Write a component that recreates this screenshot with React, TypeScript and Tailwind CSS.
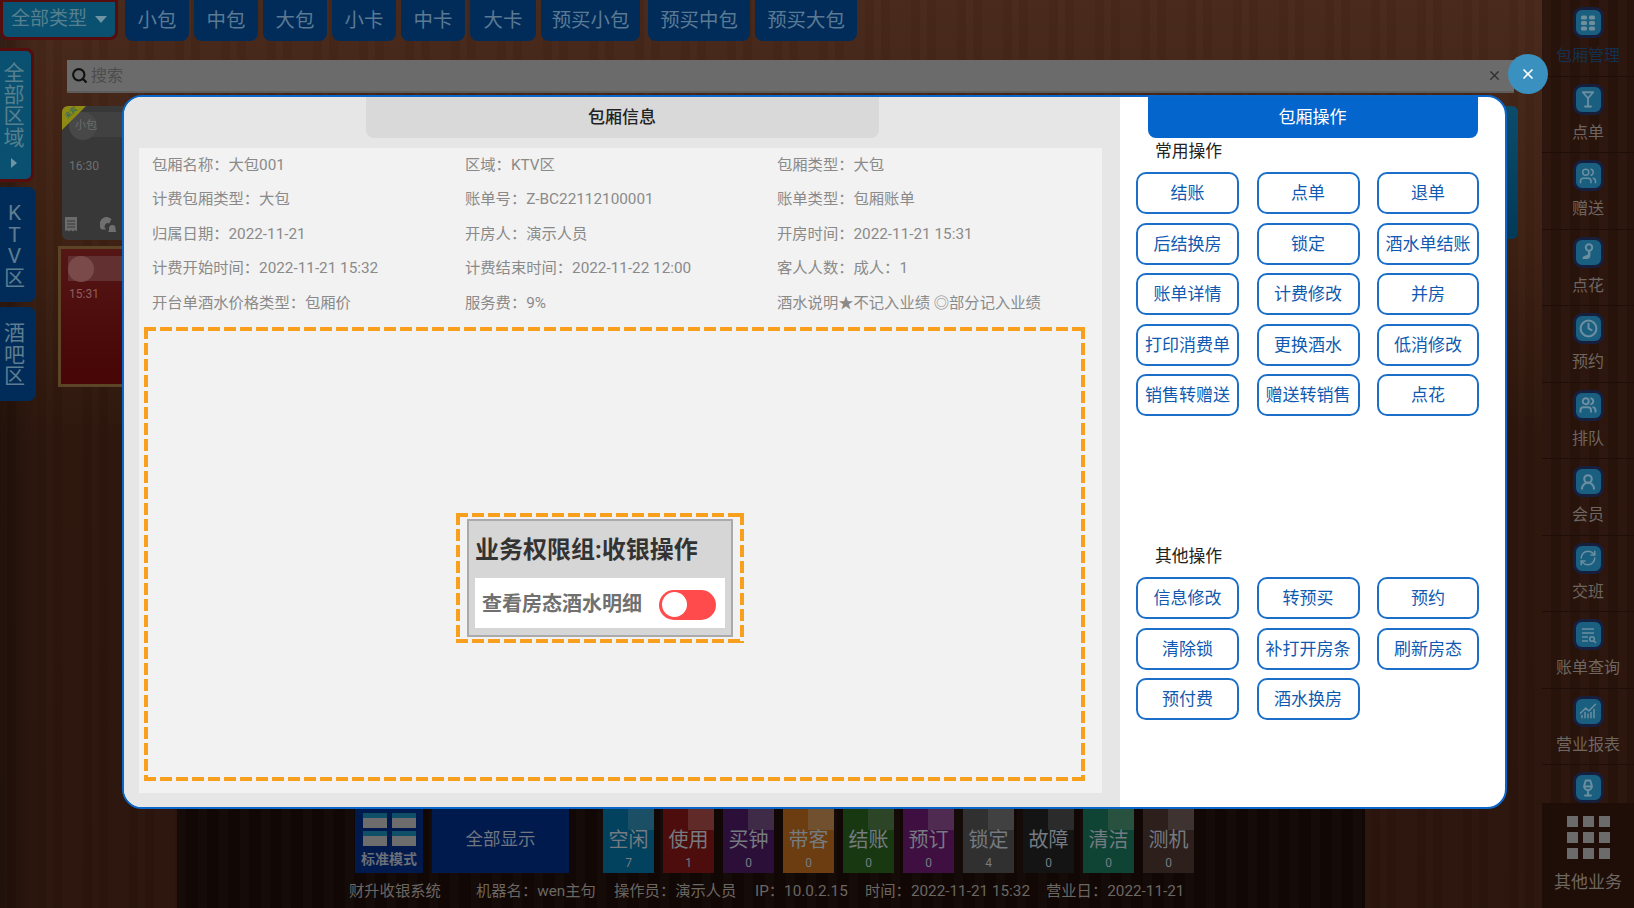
import {Search, X, Martini, Users, Clock, UserRound, RefreshCw, ChartNoAxesCombined, Wine} from 'lucide-react';
import type {ReactNode} from 'react';

const typeTabs = [
  {label: '小包', w: 'w-[64px]'},
  {label: '中包', w: 'w-[64px]'},
  {label: '大包', w: 'w-[64px]'},
  {label: '小卡', w: 'w-[64px]'},
  {label: '中卡', w: 'w-[64px]'},
  {label: '大卡', w: 'w-[66px]'},
  {label: '预买小包', w: 'w-[99px]'},
  {label: '预买中包', w: 'w-[102px] ml-[3px]'},
  {label: '预买大包', w: 'w-[102px]'},
];

const infoRows = [
  ['包厢名称：大包001', '区域：KTV区', '包厢类型：大包'],
  ['计费包厢类型：大包', '账单号：Z-BC22112100001', '账单类型：包厢账单'],
  ['归属日期：2022-11-21', '开房人：演示人员', '开房时间：2022-11-21 15:31'],
  ['计费开始时间：2022-11-21 15:32', '计费结束时间：2022-11-22 12:00', '客人人数：成人：1'],
  ['开台单酒水价格类型：包厢价', '服务费：9%', '酒水说明★不记入业绩 ◎部分记入业绩'],
];

const commonOps = ['结账', '点单', '退单', '后结换房', '锁定', '酒水单结账', '账单详情', '计费修改', '并房', '打印消费单', '更换酒水', '低消修改', '销售转赠送', '赠送转销售', '点花'];
const otherOps = ['信息修改', '转预买', '预约', '清除锁', '补打开房条', '刷新房态', '预付费', '酒水换房'];

const statuses = [
  {label: '空闲', count: 7, bg: 'bg-[#03425f]', hi: 'bg-[#1a4f66]'},
  {label: '使用', count: 1, bg: 'bg-[#4d0d0c]', hi: 'bg-[#5f2a27]'},
  {label: '买钟', count: 0, bg: 'bg-[#2c0f38]', hi: 'bg-[#3f2a48]'},
  {label: '带客', count: 0, bg: 'bg-[#6b3d10]', hi: 'bg-[#70502f]'},
  {label: '结账', count: 0, bg: 'bg-[#183812]', hi: 'bg-[#2c4527]'},
  {label: '预订', count: 0, bg: 'bg-[#3f0f42]', hi: 'bg-[#4f2a51]'},
  {label: '锁定', count: 4, bg: 'bg-[#303030]', hi: 'bg-[#414141]'},
  {label: '故障', count: 0, bg: 'bg-[#141414]', hi: 'bg-[#2b2b2b]'},
  {label: '清洁', count: 0, bg: 'bg-[#0f4434]', hi: 'bg-[#28513f]'},
  {label: '测机', count: 0, bg: 'bg-[#2c1f1c]', hi: 'bg-[#3e3331]'},
];

const iconClass = 'text-[#6b8fa0]';

const sideItems: {label: string; active?: boolean; icon: ReactNode}[] = [
  {
    label: '包厢管理',
    active: true,
    icon: (
      <svg width="20" height="20" viewBox="0 0 20 20" fill="#6f8f9c">
        <rect x="3" y="2.5" width="6" height="4" rx="1.5" />
        <rect x="11" y="2.5" width="6" height="4" rx="1.5" />
        <rect x="3" y="8" width="6" height="4" rx="1.5" />
        <rect x="11" y="8" width="6" height="4" rx="1.5" />
        <rect x="3" y="13.5" width="6" height="4" rx="1.5" />
        <rect x="11" y="13.5" width="6" height="4" rx="1.5" />
      </svg>
    ),
  },
  {label: '点单', icon: <Martini size={18} className={iconClass} strokeWidth={2.4} />},
  {label: '赠送', icon: <Users size={18} className={iconClass} />},
  {
    label: '点花',
    icon: (
      <svg width="20" height="20" viewBox="0 0 20 20" fill="#6b8fa0">
        <circle cx="11" cy="5.5" r="3.2" fill="none" stroke="#6b8fa0" strokeWidth="2" />
        <path d="M10 9h2.4v4.5c0 2.2-1.4 3.5-3.4 3.5H4.5c0-2 1.2-3 3-3.4 1.600-.4 2.500-1 2.500-2.100z" />
      </svg>
    ),
  },
  {label: '预约', icon: <Clock size={19} className={iconClass} strokeWidth={2.6} />},
  {label: '排队', icon: <Users size={18} className={iconClass} strokeWidth={2.6} />},
  {label: '会员', icon: <UserRound size={18} className={iconClass} strokeWidth={2.8} />},
  {label: '交班', icon: <RefreshCw size={18} className={iconClass} />},
  {
    label: '账单查询',
    icon: (
      <svg width="20" height="20" viewBox="0 0 20 20" fill="none" stroke="#6b8fa0" strokeWidth="1.500">
        <path d="M4 4h12M4 8h12M4 12h6M4 16h6" />
        <circle cx="14" cy="14" r="2.300" />
        <path d="M15.800 15.800 18 18" />
      </svg>
    ),
  },
  {label: '营业报表', icon: <ChartNoAxesCombined size={18} className={iconClass} />},
  {label: '', icon: <Wine size={18} className={iconClass} strokeWidth={2.6} />},
];

const dashed = "[background:repeating-linear-gradient(90deg,#f99f1e_0_12px,transparent_12px_16px)_top/100%_4px_no-repeat,repeating-linear-gradient(90deg,#f99f1e_0_12px,transparent_12px_16px)_bottom/100%_4px_no-repeat,repeating-linear-gradient(180deg,#f99f1e_0_12px,transparent_12px_16px)_left/4px_100%_no-repeat,repeating-linear-gradient(180deg,#f99f1e_0_12px,transparent_12px_16px)_right/4px_100%_no-repeat]";

function OpButton({label}: {label: string}) {
  return (
    <button className="h-[42px] pt-[2px] rounded-[10px] border-2 border-[#1b6fc8] bg-white text-[17px] text-[#0f5ab0] whitespace-nowrap">
      {label}
    </button>
  );
}

function ServerIcon() {
  return (
    <div className="w-[24px] h-[15px] flex flex-col">
      <div className="h-[5px] bg-[#0f4f68]"></div>
      <div className="flex-1 bg-[#6d6d6d]"></div>
    </div>
  );
}

export default function App() {
  return (
    <div className="relative w-[1634px] h-[908px] overflow-hidden flex font-['Roboto','Noto_Sans_CJK_SC',sans-serif] bg-[repeating-linear-gradient(90deg,rgba(255,255,255,0.012)_0_7px,rgba(0,0,0,0.03)_7px_16px,rgba(255,255,255,0.006)_16px_37px,rgba(0,0,0,0.03)_37px_46px),linear-gradient(90deg,rgba(0,0,0,0.3)_0,rgba(0,0,0,0)_40px),linear-gradient(180deg,#48291b_0%,#3d2012_28%,#2c160c_48%,#2b150c_100%)]">
      <div className="w-[1542px] flex flex-col">
        {/* top type tabs */}
        <div className="h-[38px] flex shrink-0">
          <div className="w-[118px] h-[41px] -mt-[1px] rounded-b-[8px] border-[3px] border-[#560d0d] bg-[#0a5070] flex items-center justify-center gap-[8px] text-[19px] text-[#56808f] z-10">
            全部类型
            <span className="w-0 h-0 border-x-[6px] border-x-transparent border-t-[7px] border-t-[#6f95a5]"></span>
          </div>
          <div className="flex gap-[5px] ml-[7px]">
            {typeTabs.map((tab) => (
              <div key={tab.label} className={`${tab.w} h-[41px] rounded-b-[8px] bg-[#012c5a] flex items-center justify-center text-[19.400px] text-[#5a7a94]`}>
                {tab.label}
              </div>
            ))}
          </div>
        </div>

        <div className="flex-1 flex min-h-0">
          {/* area tabs */}
          <div className="w-[35px] shrink-0 pt-[10px] flex flex-col">
            <div className="w-[34px] h-[134px] rounded-r-[8px] border-y-[3px] border-r-[3px] border-[#560d0d] bg-[#0a5070] flex flex-col items-center pt-[12px] pr-[3px] text-[21px] leading-[21.500px] text-[#56808f]">
              <span>全</span>
              <span>部</span>
              <span>区</span>
              <span>域</span>
              <span className="mt-[9px] w-0 h-0 border-y-[5px] border-y-transparent border-l-[6px] border-l-[#6f95a5]"></span>
            </div>
            <div className="mt-[5px] w-[36px] h-[115px] rounded-r-[8px] bg-[#012c5a] flex flex-col items-center pt-[16px] pr-[7px] text-[21px] leading-[21.500px] text-[#5e7d90]">
              <span>K</span>
              <span>T</span>
              <span>V</span>
              <span>区</span>
            </div>
            <div className="mt-[5px] w-[36px] h-[94px] rounded-r-[8px] bg-[#012c5a] flex flex-col items-center pt-[16px] pr-[7px] text-[21px] leading-[21.500px] text-[#5e7d90]">
              <span>酒</span>
              <span>吧</span>
              <span>区</span>
            </div>
          </div>

          {/* rooms */}
          <div className="flex-1 pl-[27px] pr-[24px] pt-[22px]">
            <div className="ml-[5px] h-[33px] mr-[4px] bg-[#6b6b6b] border-b-2 border-[#5d5d5d] flex items-center pl-[4px] pr-[12px]">
              <Search size={17} className="text-[#111] mr-[3px]" strokeWidth={3} />
              <span className="text-[16px] text-[#4c4c4c] flex-1">搜索</span>
              <X size={15} className="text-[#2e2e2e]" strokeWidth={2} />
            </div>
            <div className="mt-[13px] flex justify-between">
              <div>
                <div className="relative w-[140px] h-[134px] rounded-[6px] bg-[#383838] overflow-hidden">
                  <div className="absolute left-[7px] top-[6px] w-[120px] h-[25px] rounded-l-full bg-[#414141]"></div>
                  <div className="absolute left-[7px] top-[6px] w-[28px] h-[28px] rounded-full bg-[#484848] flex items-center justify-center pl-[6px] text-[11px] text-[#6b6b6b]">小包</div>
                  <div className="absolute left-0 top-0 w-0 h-0 border-t-[24px] border-t-[#8e8a14] border-r-[24px] border-r-transparent"></div>
                  <span className="absolute left-[2px] top-[1px] -rotate-45 text-[7px] leading-[12px] text-[#1c5f6e]">来宾</span>
                  <span className="absolute left-[7px] top-[51px] text-[12px] text-[#6f6f6f]">16:30</span>
                  <svg className="absolute left-[2px] top-[111px]" width="14" height="16" viewBox="0 0 14 16" fill="#6b6b6b">
                    <path d="M1 0h12v14.500l-2-1.500-2 1.500-2-1.500-2 1.500-2-1.500-2 1.500z" />
                    <path d="M3 4h8M3 7h8M3 10h8" stroke="#383838" strokeWidth="1" />
                  </svg>
                  <svg className="absolute left-[38px] top-[111px]" width="17" height="16" viewBox="0 0 17 16" fill="#6f6f6f">
                    <path d="M7.500 0a7.500 7.500 0 0 0-6 12.500h5a3 3 0 0 1 3-6l1.500-4 1.500 1A7.500 7.500 0 0 0 7.500 0z" />
                    <path d="M12.500 8a3 3 0 0 1 3 3v2.500l1 1.500H8l1-1.500V11a3 3 0 0 1 3.500-3z" />
                  </svg>
                </div>
                <div className="-ml-[4px] mt-[6px] relative w-[144px] h-[141px] border-[3px] border-[#5c4426] bg-[linear-gradient(180deg,#551616,#470505)]">
                  <div className="absolute left-[7px] top-[7px] w-[120px] h-[25px] bg-[#623030]"></div>
                  <div className="absolute left-[7px] top-[7px] w-[26px] h-[26px] rounded-full bg-[#7a4a4a]"></div>
                  <span className="absolute left-[8px] top-[36px] text-[12px] text-[#8c5f5f]">15:31</span>
                </div>
              </div>
              <div className="w-[140px] h-[133px] rounded-[6px] bg-[linear-gradient(180deg,#0b4c6a,#023a58)]"></div>
            </div>
          </div>
        </div>

        {/* status bar */}
        <div className="ml-[177px] w-[1188px] h-[103px] shrink-0 bg-[#120805] bg-[repeating-linear-gradient(90deg,rgba(255,255,255,0.012)_0_9px,rgba(0,0,0,0.08)_9px_21px)] pl-[178px]">
          <div className="flex h-[68px]">
            <div className="w-[68px] bg-[#001a4d] flex flex-col items-center pt-[8px]">
              <div className="grid grid-cols-2 gap-x-[5px] gap-y-[3px]">
                <ServerIcon />
                <ServerIcon />
                <ServerIcon />
                <ServerIcon />
              </div>
              <span className="mt-[3px] text-[14px] leading-[20px] font-bold text-[#6b6f78]">标准模式</span>
            </div>
            <div className="ml-[9px] w-[137px] pt-[1px] bg-[#001a4d] flex items-center justify-center text-[17.500px] text-[#70757f]">全部显示</div>
            <div className="ml-[34px] flex gap-[9px]">
              {statuses.map((s) => (
                <div key={s.label} className={`relative w-[51px] ${s.bg} flex flex-col items-center pt-[21px] text-[#757b80]`}>
                  <div className={`absolute right-0 top-0 w-[26px] h-[25px] ${s.hi}`}></div>
                  <span className="relative text-[20px] leading-[28px]">{s.label}</span>
                  <span className="relative text-[12px] leading-[18px]">{s.count}</span>
                </div>
              ))}
            </div>
          </div>
          <div className="-ml-[6px] mt-[8px] flex text-[15.300px] leading-[20px] text-[#6b6763] whitespace-nowrap">
            <span className="w-[127px]">财升收银系统</span>
            <span className="w-[138px]">机器名：wen主句</span>
            <span className="w-[141px]">操作员：演示人员</span>
            <span className="w-[110px]">IP：10.0.2.15</span>
            <span className="w-[181px]">时间：2022-11-21 15:32</span>
            <span>营业日：2022-11-21</span>
          </div>
        </div>
      </div>

      {/* right nav */}
      <div className="relative w-[92px] bg-[#2a140c] bg-[repeating-linear-gradient(90deg,rgba(255,255,255,0.012)_0_9px,rgba(0,0,0,0.06)_9px_19px)] flex flex-col">
        {sideItems.map((item) => (
          <div key={item.label} className="h-[76.500px] shrink-0 flex flex-col items-center pt-[7px] border-b border-[#1f0e07]">
            <div className="w-[31px] h-[31px] rounded-[9px] border-[3px] border-[#171f3e] bg-[#1a5f80] flex items-center justify-center">
              {item.icon}
            </div>
            <span className={`mt-[7px] text-[16px] leading-[22px] whitespace-nowrap ${item.active ? 'text-[#14304f]' : 'text-[#6e6660]'}`}>{item.label}</span>
          </div>
        ))}
        <div className="absolute left-0 right-0 bottom-0 h-[105px] bg-[#1f0e08] flex flex-col items-center pt-[13px]">
          <div className="grid grid-cols-3 gap-x-[5px] gap-y-[5px]">
            {Array.from({length: 9}).map((_, i) => (
              <div key={i} className="w-[11px] h-[11px] bg-[#6b6b6b]"></div>
            ))}
          </div>
          <span className="mt-[11px] text-[17px] leading-[24px] text-[#6e6660]">其他业务</span>
        </div>
      </div>

      {/* modal */}
      <div className="absolute left-[122px] top-[95px] w-[1385px] h-[714px] rounded-[20px] border-2 border-[#0a66c8] bg-white overflow-hidden flex">
        <div className="w-[996px] bg-[#e6e6e6] flex flex-col">
          <div className="mx-auto w-[513px] h-[41px] shrink-0 rounded-b-[8px] bg-[#d9d9d9] flex items-center justify-center text-[17px] font-medium text-[#222]">
            包厢信息
          </div>
          <div className="mt-[10px] ml-[15px] w-[963px] h-[645px] bg-[#f2f2f2]">
            <div className="pl-[13px]">
              {infoRows.map((row, i) => (
                <div key={i} className="grid grid-cols-[313px_312px_1fr] h-[34.500px] items-center text-[15.300px] text-[#8a8a8a] whitespace-nowrap">
                  {row.map((text) => (
                    <span key={text}>{text}</span>
                  ))}
                </div>
              ))}
            </div>
            <div className={`mt-[6.500px] ml-[5px] w-[941px] h-[454px] pl-[312px] pt-[186px] ${dashed}`}>
              <div className={`w-[288px] h-[130px] p-[6px_11px] ${dashed}`}>
                <div className="w-[266px] h-[118px] border-2 border-[#aaaaaa] bg-[#d6d6d6] px-[6px] flex flex-col">
                  <div className="h-[57px] pt-[1px] flex items-center text-[24px] font-bold text-[#333] whitespace-nowrap">业务权限组:收银操作</div>
                  <div className="w-[250px] h-[50px] bg-white flex items-center pl-[7px]">
                    <span className="pt-[1px] text-[20px] font-bold text-[#707070]">查看房态酒水明细</span>
                    <div className="ml-[17px] mt-[3px] w-[57px] h-[30px] rounded-full bg-[#ff4b4b] flex items-center pl-[3px]">
                      <div className="w-[25px] h-[25px] rounded-full bg-white"></div>
                    </div>
                  </div>
                </div>
              </div>
            </div>
          </div>
        </div>
        <div className="flex-1 flex flex-col">
          <div className="mx-auto w-[330px] h-[41px] shrink-0 rounded-b-[8px] bg-[#0466cc] flex items-center justify-center text-[17px] text-white">
            包厢操作
          </div>
          <div className="pl-[35px] h-[26px] text-[16.800px] leading-[26px] text-[#222]">常用操作</div>
          <div className="mt-[8px] ml-[16px] grid grid-cols-[103px_103px_102px] gap-x-[17.500px] gap-y-[8.500px]">
            {commonOps.map((op) => (
              <OpButton key={op} label={op} />
            ))}
          </div>
          <div className="pl-[35px] mt-[127px] h-[26px] text-[16.800px] leading-[26px] text-[#222]">其他操作</div>
          <div className="mt-[8px] ml-[16px] grid grid-cols-[103px_103px_102px] gap-x-[17.500px] gap-y-[8.500px]">
            {otherOps.map((op) => (
              <OpButton key={op} label={op} />
            ))}
          </div>
        </div>
      </div>

      {/* close */}
      <div className="absolute left-[1508px] top-[54px] w-[40px] h-[40px] rounded-full bg-[#3a90bf] flex items-center justify-center">
        <X size={16} className="text-white" strokeWidth={2.5} />
      </div>
    </div>
  );
}
